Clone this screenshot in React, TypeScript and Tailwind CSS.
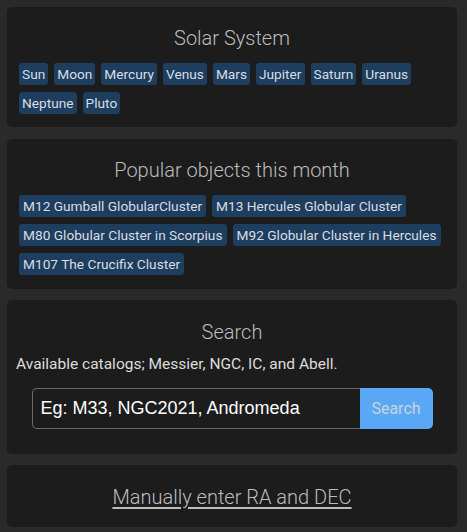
const planets = ["Sun", "Moon", "Mercury", "Venus", "Mars", "Jupiter", "Saturn", "Uranus", "Neptune", "Pluto"]

const popular = [
  "M12 Gumball GlobularCluster",
  "M13 Hercules Globular Cluster",
  "M80 Globular Cluster in Scorpius",
  "M92 Globular Cluster in Hercules",
  "M107 The Crucifix Cluster",
]

function Badge({ label, tight }: { label: string; tight?: boolean }) {
  return (
    <span
      className={`h-[22px] ${tight ? "px-[3px]" : "px-[4px]"} rounded-[3px] bg-[#1e3e5f] text-[#d9dde2] text-[13.7px] leading-[22px] whitespace-nowrap`}
    >
      {label}
    </span>
  )
}

function Card({ title, children, className = "" }: { title: string; children: React.ReactNode; className?: string }) {
  return (
    <section className={`bg-[#1c1c1c] rounded-[5px] pt-[17px] ${className}`}>
      <h2 className="text-center text-[20px] leading-[28px] font-light text-[#bcbcbc]">{title}</h2>
      {children}
    </section>
  )
}

export default function App() {
  return (
    <div
      className="min-h-[532px] bg-[#2a2a2a] pt-[7px] pb-[6px] pl-[7px] pr-[10px] flex flex-col gap-[11px]"
      style={{ fontFamily: "Roboto, 'Liberation Sans', sans-serif" }}
    >
      <Card title="Solar System" className="pb-[13px]">
        <div className="mt-[11px] px-[12px] flex flex-wrap gap-x-[6px] gap-y-[7px]">
          {planets.map((p) => (
            <Badge key={p} label={p} tight />
          ))}
        </div>
      </Card>

      <Card title="Popular objects this month" className="pb-[14px] mt-[1px]">
        <div className="mt-[11px] pl-[12px] pr-[6px] flex flex-wrap gap-x-[6px] gap-y-[7px]">
          {popular.map((p) => (
            <Badge key={p} label={p} />
          ))}
        </div>
      </Card>

      <Card title="Search" className="pb-[25px] pt-[18px]">
        <p className="mt-[8px] px-[9px] text-[15.5px] leading-[20px] text-[#dcdcdc]">
          Available catalogs; Messier, NGC, IC, and Abell.
        </p>
        <div className="mt-[14px] mx-auto w-[401px] h-[41px] flex">
          <input
            className="flex-1 min-w-0 h-full bg-transparent border border-[#6a6a6a] border-r-0 rounded-l-[5px] px-[8px] text-[18px] text-white placeholder:text-white outline-none"
            style={{ fontFamily: "'Liberation Sans', Arial, sans-serif" }}
            placeholder="Eg: M33, NGC2021, Andromeda"
          />
          <button className="w-[73px] h-full bg-[#5aa7f5] rounded-r-[5px] text-[16px] text-[#c9d3de]">Search</button>
        </div>
      </Card>

      <section className="bg-[#1c1c1c] rounded-[5px] pt-[18px] pb-[16px] text-center">
        <a href="#" className="text-[20px] leading-[28px] font-light text-[#bcbcbc] underline underline-offset-[3px]">
          Manually enter RA and DEC
        </a>
      </section>
    </div>
  )
}
